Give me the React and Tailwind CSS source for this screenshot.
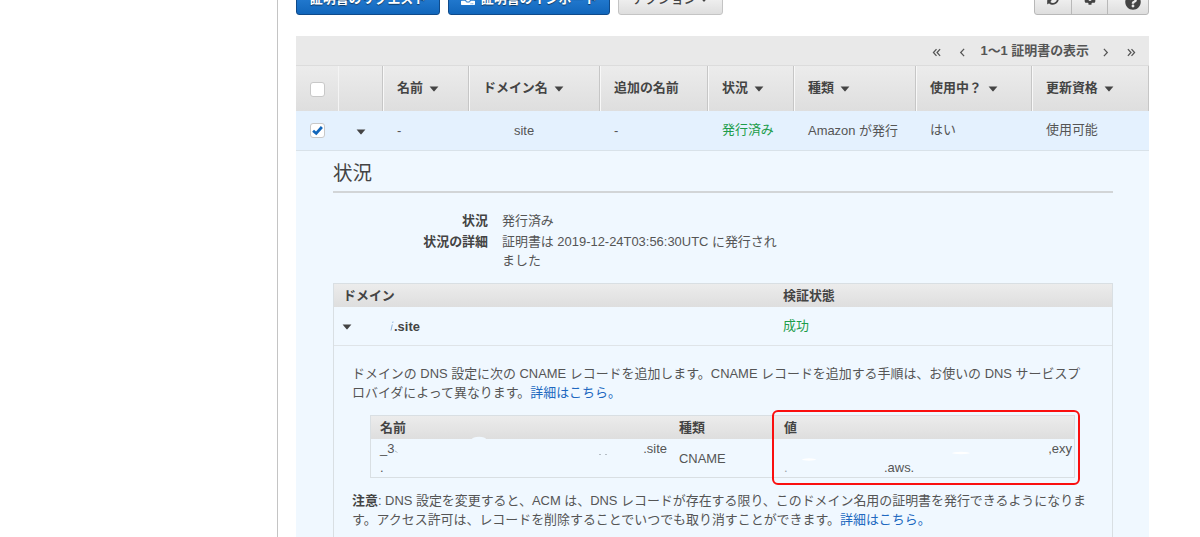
import React, { useState } from 'react';
import { FaCog, FaQuestionCircle, FaSyncAlt, FaUpload } from 'react-icons/fa';

const columns = [
  { label: '名前', sortable: true },
  { label: 'ドメイン名', sortable: true },
  { label: '追加の名前', sortable: false },
  { label: '状況', sortable: true },
  { label: '種類', sortable: true },
  { label: '使用中？', sortable: true },
  { label: '更新資格', sortable: true },
];

function Caret({ className = '' }) {
  return (
    <svg viewBox="0 0 10 6" className={`h-[6px] w-[10px] shrink-0 fill-[#444] ${className}`}>
      <path d="M0.6 0.5h8.8L5.6 5.1a0.8 0.8 0 0 1-1.2 0z" />
    </svg>
  );
}

function Chevron({ double, right }) {
  return (
    <svg
      viewBox="0 0 10 10"
      className={`mt-[3px] h-[9px] w-[9px] fill-none stroke-[#555] stroke-[1.4] ${right ? 'rotate-180' : ''}`}
    >
      {double ? <path d="M5 1.2L1.6 5L5 8.8M9 1.2L5.6 5L9 8.8" /> : <path d="M6.8 1L3 5L6.8 9" />}
    </svg>
  );
}

function Checkbox({ checked, onClick }) {
  return (
    <button
      onClick={onClick}
      className="flex h-[15px] w-[15px] items-center justify-center rounded-[3px] border border-[#c8c8c8] bg-white"
    >
      {checked && (
        <svg viewBox="0 0 12 12" className="h-[11px] w-[11px] fill-none stroke-[#1166bb] stroke-[3]">
          <path d="M1.2 6.2L4.6 9.2L10.8 2.2" />
        </svg>
      )}
    </button>
  );
}

function Toolbar() {
  return (
    <div className="flex h-[15px] items-end justify-between overflow-hidden font-bold">
      <div className="flex shrink-0 gap-2">
        <button className="flex h-[31px] w-[144px] items-center justify-center rounded-[3px] border border-[#0f4a8a] bg-linear-to-b from-[#2f8ae0] to-[#1166bb] pb-[2px] text-white text-shadow-[0_1px_1px_rgb(0_0_0/0.5)]">
          証明書のリクエスト
        </button>
        <button className="flex h-[31px] w-[162px] items-center justify-center gap-[6px] rounded-[3px] border border-[#0f4a8a] bg-linear-to-b from-[#2f8ae0] to-[#1166bb] pb-[2px] text-white text-shadow-[0_1px_1px_rgb(0_0_0/0.5)]">
          <FaUpload className="mb-[2px] h-[14px] w-[14px]" />
          証明書のインポート
        </button>
        <button className="flex h-[31px] w-[105px] items-center justify-center gap-[2px] rounded-[3px] border border-[#c4c4c4] bg-linear-to-b from-white to-[#dedede] pb-[2px] font-medium text-[#444]">
          アクション
          <Caret className="mt-[3px] scale-75" />
        </button>
      </div>
      <div className="flex h-[31px] w-[115px] shrink-0 rounded-[3px] border border-[#b8b8b8] bg-linear-to-b from-white to-[#dedede] text-[#444]">
        <button className="flex w-[37px] items-center justify-center border-r border-[#b8b8b8] pb-[2px]">
          <FaSyncAlt className="h-3 w-3" />
        </button>
        <button className="flex w-[36px] items-center justify-center border-r border-[#b8b8b8] pb-[2px]">
          <FaCog className="h-3 w-3" />
        </button>
        <button className="flex flex-1 items-center justify-center pt-[4px] pl-[9px]">
          <FaQuestionCircle className="h-[16px] w-[16px]" />
        </button>
      </div>
    </div>
  );
}

function Pager() {
  return (
    <div className="flex h-[29px] items-center justify-end bg-[#e9e9e9] pr-[13px] font-bold">
      <Chevron double />
      <span className="ml-[17px]">
        <Chevron />
      </span>
      <span className="mr-[12px] ml-[13px]">1〜1 証明書の表示</span>
      <Chevron right />
      <span className="ml-[17px]">
        <Chevron double right />
      </span>
    </div>
  );
}

function RecordTable() {
  return (
    <div className="mt-[13px] ml-[18px] h-[63px] w-[705px] border border-[#d9dfe3]">
      <div className="grid h-[23px] grid-cols-[299px_105px_1fr] items-center bg-linear-to-b from-[#ececec] to-[#dedede] pb-px pl-[9px] font-bold text-[#444]">
        <span>名前</span>
        <span>種類</span>
        <span>値</span>
      </div>
      <div className="grid grid-cols-[299px_105px_1fr] pl-[9px]">
        <div className="pr-[12px]">
          <div className="flex justify-between">
            <span>_3</span>
            <span>.site</span>
          </div>
          <div>.</div>
        </div>
        <div className="self-center">CNAME</div>
        <div className="pr-[2px]">
          <div className="text-right">,exy</div>
          <div className="flex">
            <span className="w-[100px] text-[#9aa3a9]">.</span>
            <span>.aws.</span>
          </div>
        </div>
      </div>
    </div>
  );
}

// leftovers of the eraser strokes over the masked values
function MaskMarks() {
  return (
    <svg viewBox="0 0 705 63" className="absolute top-0 left-[18px] h-[63px] w-[705px]">
      <ellipse cx="109" cy="24" rx="7" ry="2.2" className="fill-[#f0f8ff]" />
      <ellipse cx="439" cy="44.5" rx="7" ry="1.2" className="fill-white" />
      <ellipse cx="591" cy="38" rx="9" ry="1.2" className="fill-white" />
      <path d="M25 36l2.5 1.5M229 39.5h2M235 39.5h2" className="fill-none stroke-[#b5bdc4]" />
    </svg>
  );
}

function DomainTable() {
  return (
    <div className="mt-[13px] h-[300px] border border-[#d9dfe3]">
      <div className="grid h-[23px] grid-cols-[440px_1fr] items-center bg-linear-to-b from-[#ececec] to-[#dedede] pb-px pl-[9px] font-bold text-[#444]">
        <span>ドメイン</span>
        <span>検証状態</span>
      </div>
      <div className="grid h-[39px] grid-cols-[440px_1fr] items-center border-b border-[#dfe4e8] pl-[9px]">
        <div className="flex items-center font-bold text-[#444]">
          <Caret className="mt-[2px] -ml-px" />
          <svg viewBox="0 0 4 10" className="ml-[38px] h-[10px] w-[4px] fill-none stroke-[#8fb4dc]">
            <path d="M3 0.5L2.7 2M2.3 3.5L1 9.5" />
          </svg>
          <span>.site</span>
        </div>
        <span className="pb-px text-[#1d9d4a]">成功</span>
      </div>
      <div className="pt-[18px] pl-[18px]">
        <p className="whitespace-nowrap">
          ドメインの DNS 設定に次の CNAME レコードを追加します。CNAME レコードを追加する手順は、お使いの DNS サービスプ
          <br />
          ロバイダによって異なります。
          <a className="text-[#2068c0]">詳細はこちら。</a>
        </p>
        <div className="relative">
          <RecordTable />
          <MaskMarks />
          <div className="absolute -top-[5px] left-[420px] h-[75px] w-[308px] rounded-[6px] border-2 border-[#fa0f0f]" />
        </div>
        <p className="mt-[13px] whitespace-nowrap">
          <b className="text-[#444]">注意</b>: DNS 設定を変更すると、ACM は、DNS レコードが存在する限り、このドメイン名用の証明書を発行できるようになりま
          <br />
          す。アクセス許可は、レコードを削除することでいつでも取り消すことができます。
          <a className="text-[#2068c0]">詳細はこちら。</a>
        </p>
      </div>
    </div>
  );
}

function CertificateDetail() {
  return (
    <div className="bg-[#f0f8ff] pr-[36px] pl-[37px]">
      <h2 className="h-[42px] border-b-2 border-[#d2d5d7] text-[19.5px] leading-[44px] text-[#444]">状況</h2>
      <div className="mt-[18px] grid grid-cols-[155px_1fr] gap-x-[14px] gap-y-[2px]">
        <span className="text-right font-bold text-[#444]">状況</span>
        <span>発行済み</span>
        <span className="text-right font-bold text-[#444]">状況の詳細</span>
        <span>
          証明書は 2019-12-24T03:56:30UTC に発行され
          <br />
          ました
        </span>
      </div>
      <DomainTable />
    </div>
  );
}

function App() {
  const [selected, setSelected] = useState(true);

  return (
    <div
      lang="ja"
      className="flex h-[537px] w-[1200px] overflow-hidden bg-white font-['Liberation_Sans','Noto_Sans_CJK_JP',sans-serif] text-[12.95px] leading-[19px] text-[#555]"
    >
      <aside className="w-[277px] shrink-0" />
      <main className="w-[872px] shrink-0 border-l border-[#c4c4c4] pl-[18px]">
        <Toolbar />
        <div className="mt-[21px]">
          <Pager />
          <div className="grid h-[46px] grid-cols-[43px_44px_86px_131px_108px_86px_122px_116px_117px] border-t border-[#dcdcdc] bg-linear-to-b from-[#ececec] to-[#dedede] font-bold text-[#444]">
            <div className="flex items-center border-r border-[#f4f4f4] pt-px pl-[14px]">
              <Checkbox />
            </div>
            <div className="border-r border-[#c6c6c6]" />
            {columns.map((col) => (
              <div
                key={col.label}
                className="flex items-center gap-[6px] border-r border-l border-r-[#c6c6c6] border-l-[#f8f8f8] pb-[2px] pl-[13px]"
              >
                {col.label}
                {col.sortable && <Caret className="mt-[3px]" />}
              </div>
            ))}
          </div>
          <div className="grid h-[40px] grid-cols-[43px_44px_86px_131px_108px_86px_122px_116px_117px] items-center border-b border-[#d9e2e9] bg-[#e4f1fe]">
            <div className="pl-[14px]">
              <Checkbox checked={selected} onClick={() => setSelected(!selected)} />
            </div>
            <div className="pt-[2px] pl-[17px]">
              <Caret />
            </div>
            <div className="pl-[14px]">-</div>
            <div className="pl-[45px]">site</div>
            <div className="pl-[14px]">-</div>
            <div className="pb-[2px] pl-[14px] text-[#1d9d4a]">発行済み</div>
            <div className="pl-[14px]">Amazon が発行</div>
            <div className="pb-[2px] pl-[14px]">はい</div>
            <div className="pb-[2px] pl-[14px]">使用可能</div>
          </div>
          <CertificateDetail />
        </div>
      </main>
    </div>
  );
}

export default App;
